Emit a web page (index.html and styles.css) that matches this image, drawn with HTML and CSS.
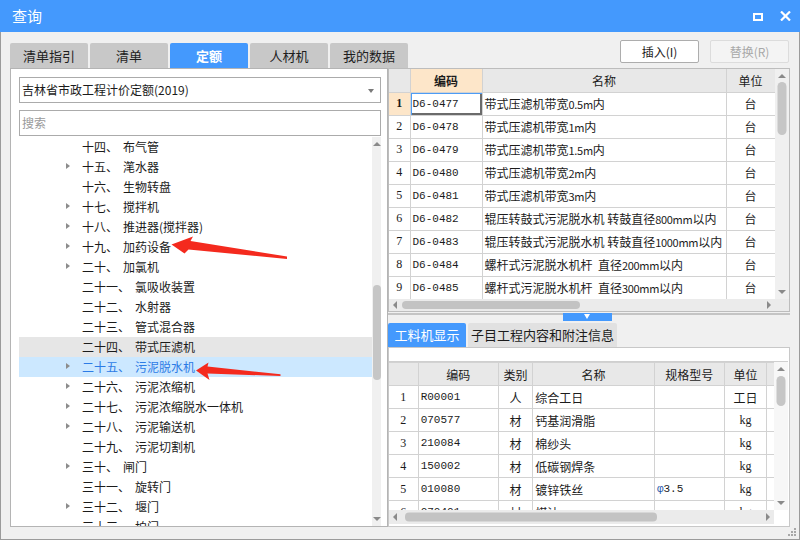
FILE: index.html
```html
<!DOCTYPE html>
<html lang="zh">
<head>
<meta charset="utf-8">
<title>查询</title>
<link rel="stylesheet" href="styles.css">
</head>
<body>
<div class="window">
  <div class="titlebar">
    <span class="title">查询</span>
    <div class="winctl">
      <svg class="ico-max" width="10" height="8" viewBox="0 0 10 8"><rect x="1" y="1" width="8" height="6" fill="none" stroke="#fff" stroke-width="2"/></svg>
      <svg class="ico-close" width="11" height="10" viewBox="0 0 11 10"><path d="M1 0.5 L10 9.5 M10 0.5 L1 9.5" stroke="#fff" stroke-width="2.2"/></svg>
    </div>
  </div>
  <div class="content">
    <div class="toprow">
      <div class="tabs">
        <div class="tab">清单指引</div>
        <div class="tab">清单</div>
        <div class="tab active">定额</div>
        <div class="tab">人材机</div>
        <div class="tab">我的数据</div>
      </div>
      <div class="buttons">
        <div class="btn">插入(I)</div>
        <div class="btn disabled">替换(R)</div>
      </div>
    </div>
    <div class="main">
      <div class="leftpanel">
        <div class="combo">吉林省市政工程计价定额(2019)<span class="combo-arrow"></span></div>
        <div class="search">搜索</div>
        <div class="tree">
          <div class="tree-rows">
            <div class="trow"><span class="tw"></span><span>十四、</span><span class="nm">布气管</span></div>
            <div class="trow"><span class="tw on"></span><span>十五、</span><span class="nm">滗水器</span></div>
            <div class="trow"><span class="tw"></span><span>十六、</span><span class="nm">生物转盘</span></div>
            <div class="trow"><span class="tw on"></span><span>十七、</span><span class="nm">搅拌机</span></div>
            <div class="trow"><span class="tw on"></span><span>十八、</span><span class="nm">推进器(搅拌器)</span></div>
            <div class="trow"><span class="tw on"></span><span>十九、</span><span class="nm">加药设备</span></div>
            <div class="trow"><span class="tw on"></span><span>二十、</span><span class="nm">加氯机</span></div>
            <div class="trow"><span class="tw"></span><span>二十一、</span><span class="nm">氯吸收装置</span></div>
            <div class="trow"><span class="tw"></span><span>二十二、</span><span class="nm">水射器</span></div>
            <div class="trow"><span class="tw"></span><span>二十三、</span><span class="nm">管式混合器</span></div>
            <div class="trow hover"><span class="tw"></span><span>二十四、</span><span class="nm">带式压滤机</span></div>
            <div class="trow selected"><span class="tw on"></span><span>二十五、</span><span class="nm">污泥脱水机</span></div>
            <div class="trow"><span class="tw on"></span><span>二十六、</span><span class="nm">污泥浓缩机</span></div>
            <div class="trow"><span class="tw on"></span><span>二十七、</span><span class="nm">污泥浓缩脱水一体机</span></div>
            <div class="trow"><span class="tw on"></span><span>二十八、</span><span class="nm">污泥输送机</span></div>
            <div class="trow"><span class="tw"></span><span>二十九、</span><span class="nm">污泥切割机</span></div>
            <div class="trow"><span class="tw on"></span><span>三十、</span><span class="nm">闸门</span></div>
            <div class="trow"><span class="tw"></span><span>三十一、</span><span class="nm">旋转门</span></div>
            <div class="trow"><span class="tw on"></span><span>三十二、</span><span class="nm">堰门</span></div>
            <div class="trow"><span class="tw"></span><span>三十三、</span><span class="nm">拍门</span></div>
          </div>
          <div class="vscroll tree-scroll">
            <span class="arr up"></span>
            <span class="thumb tree-thumb"></span>
            <span class="arr down"></span>
          </div>
        </div>
      </div>
      <div class="rightpanel">
        <div class="gridtop">
          <div class="gridarea">
            <table class="tbl top">
              <colgroup><col style="width:21px"><col style="width:72px"><col style="width:244px"><col style="width:49px"></colgroup>
              <thead><tr><th></th><th class="act">编码</th><th>名称</th><th>单位</th></tr></thead>
              <tbody>
                <tr><td class="rn act b">1</td><td class="code sel">D6-0477</td><td class="name">带式压滤机带宽<span class="a">0.5m</span>内</td><td class="c">台</td></tr>
                <tr><td class="rn">2</td><td class="code">D6-0478</td><td class="name">带式压滤机带宽<span class="a">1m</span>内</td><td class="c">台</td></tr>
                <tr><td class="rn">3</td><td class="code">D6-0479</td><td class="name">带式压滤机带宽<span class="a">1.5m</span>内</td><td class="c">台</td></tr>
                <tr><td class="rn">4</td><td class="code">D6-0480</td><td class="name">带式压滤机带宽<span class="a">2m</span>内</td><td class="c">台</td></tr>
                <tr><td class="rn">5</td><td class="code">D6-0481</td><td class="name">带式压滤机带宽<span class="a">3m</span>内</td><td class="c">台</td></tr>
                <tr><td class="rn">6</td><td class="code">D6-0482</td><td class="name">辊压转鼓式污泥脱水机 转鼓直径<span class="a">800mm</span>以内</td><td class="c">台</td></tr>
                <tr><td class="rn">7</td><td class="code">D6-0483</td><td class="name">辊压转鼓式污泥脱水机 转鼓直径<span class="a">1000mm</span>以内</td><td class="c">台</td></tr>
                <tr><td class="rn">8</td><td class="code">D6-0484</td><td class="name">螺杆式污泥脱水机杆&nbsp; 直径<span class="a">200mm</span>以内</td><td class="c">台</td></tr>
                <tr><td class="rn">9</td><td class="code">D6-0485</td><td class="name">螺杆式污泥脱水机杆&nbsp; 直径<span class="a">300mm</span>以内</td><td class="c">台</td></tr>
              </tbody>
            </table>
          </div>
          <div class="vscroll top-v">
            <span class="arr up"></span>
            <span class="thumb top-vthumb"></span>
            <span class="arr down"></span>
          </div>
          <div class="hscroll top-h">
            <span class="arr left"></span>
            <span class="hthumb top-hthumb"></span>
            <span class="arr right"></span>
          </div>
          <div class="corner"></div>
        </div>
        <div class="splitter"><span class="handle"></span></div>
        <div class="subtabs">
          <div class="subtab active">工料机显示</div>
          <div class="subtab">子目工程内容和附注信息</div>
        </div>
        <div class="lowerpanel">
          <div class="gridbottom">
            <div class="gridarea">
              <table class="tbl bottom">
                <colgroup><col style="width:28px"><col style="width:77px"><col style="width:33px"><col style="width:117px"><col style="width:67px"><col style="width:41px"><col style="width:40px"></colgroup>
                <thead><tr><th></th><th>编码</th><th>类别</th><th>名称</th><th>规格型号</th><th>单位</th><th class="l">含量</th></tr></thead>
                <tbody>
                  <tr><td class="rn">1</td><td class="code">R00001</td><td class="c">人</td><td class="name">综合工日</td><td></td><td class="c">工日</td><td class="l">2</td></tr>
                  <tr><td class="rn">2</td><td class="code">070577</td><td class="c">材</td><td class="name">钙基润滑脂</td><td></td><td class="c unit">kg</td><td></td></tr>
                  <tr><td class="rn">3</td><td class="code">210084</td><td class="c">材</td><td class="name">棉纱头</td><td></td><td class="c unit">kg</td><td></td></tr>
                  <tr><td class="rn">4</td><td class="code">150002</td><td class="c">材</td><td class="name">低碳钢焊条</td><td></td><td class="c unit">kg</td><td></td></tr>
                  <tr><td class="rn">5</td><td class="code">010080</td><td class="c">材</td><td class="name">镀锌铁丝</td><td class="code"><span class="phi">φ</span>3.5</td><td class="c unit">kg</td><td></td></tr>
                  <tr><td class="rn">6</td><td class="code">070401</td><td class="c">材</td><td class="name">煤油</td><td></td><td class="c unit">kg</td><td></td></tr>
                </tbody>
              </table>
            </div>
            <div class="vscroll low-v">
              <span class="arr up"></span>
              <span class="thumb low-vthumb"></span>
              <span class="arr down"></span>
            </div>
            <div class="hscroll low-h">
              <span class="arr left"></span>
              <span class="hthumb low-hthumb"></span>
              <span class="arr right"></span>
            </div>
            <div class="corner white"></div>
          </div>
        </div>
      </div>
    </div>
  </div>
  <svg class="grip" width="9" height="9" viewBox="0 0 9 9">
    <rect x="6" y="0" width="2" height="2" fill="#a8a8a8"/>
    <rect x="3" y="3" width="2" height="2" fill="#a8a8a8"/>
    <rect x="6" y="3" width="2" height="2" fill="#a8a8a8"/>
    <rect x="0" y="6" width="2" height="2" fill="#a8a8a8"/>
    <rect x="3" y="6" width="2" height="2" fill="#a8a8a8"/>
    <rect x="6" y="6" width="2" height="2" fill="#a8a8a8"/>
  </svg>
  <svg class="annot" width="800" height="540" viewBox="0 0 800 540">
    <polygon points="171.5,244.5 193,236.5 190.5,241 287,256.5 287,259 188.5,249.5 184.5,253.5" fill="#f42a1e"/>
    <polygon points="196,370.5 208.5,362.5 207.5,366.5 280.5,374.3 280.5,376 207.5,373.5 209.5,380" fill="#f42a1e"/>
  </svg>
</div>
</body>
</html>
```
FILE: styles.css
```css
* { box-sizing: border-box; margin: 0; padding: 0; }
html, body { width: 800px; height: 540px; overflow: hidden; }
body {
  font-family: "Noto Sans CJK SC", "Noto Sans", sans-serif;
  font-size: 12px;
  color: #1b1b1b;
  background: #f0f0f0;
}
.window { width: 800px; height: 540px; display: flex; flex-direction: column; position: relative; overflow: hidden; }

/* title bar */
.titlebar {
  height: 32px; flex: none;
  background: #4499fd;
  color: #fff;
  display: flex; align-items: center; justify-content: space-between;
  padding: 0 9px 0 12px;
}
.title { font-size: 15px; line-height: 32px; }
.winctl { display: flex; align-items: center; gap: 17px; }
.ico-max { margin-top: 1px; }

/* content frame */
.content {
  flex: 1; min-height: 0;
  border: 1px solid #9b9b9b; border-top: none;
  padding: 0 9px 12px 9px;
  display: flex; flex-direction: column;
}
.toprow { height: 36px; display: flex; justify-content: space-between; flex: none; }
.tabs { display: flex; gap: 2px; margin-top: 11px; height: 25px; }
.tab {
  width: 78px; height: 25px; line-height: 25px; text-align: center;
  background: #c8c8c8; border-radius: 2px 2px 0 0;
  font-size: 13px; color: #1e1e1e;
}
.tab.active { background: #4499fd; color: #fff; font-weight: bold; }
.buttons { display: flex; gap: 11px; margin-top: 8px; margin-right: 1px; }
.btn {
  width: 79px; height: 23px; line-height: 21px; text-align: center;
  border: 1px solid #adadad; border-radius: 2px; background: #fff; font-size: 12px;
}
.btn.disabled { border-color: #dcdcdc; color: #a8a8a8; background: #f4f4f4; }

.main {
  flex: 1; min-height: 0;
  display: grid; grid-template-columns: 378px 1fr; grid-template-rows: minmax(0, 1fr);
}

/* left panel */
.leftpanel {
  background: #fff; border: 1px solid #b4b4b4;
  padding: 8px 6px 0 8px;
  display: flex; flex-direction: column; min-height: 0; overflow: hidden;
}
.combo {
  height: 26px; line-height: 24px; border: 1px solid #ababab;
  padding-left: 2px; position: relative; flex: none;
}
.combo-arrow {
  position: absolute; right: 6px; top: 11px;
  border-top: 4px solid #7a7a7a; border-left: 3.5px solid transparent; border-right: 3.5px solid transparent;
}
.search {
  margin-top: 7px; height: 26px; line-height: 24px; border: 1px solid #ababab;
  padding-left: 2px; color: #9a9a9a; flex: none;
}
.tree {
  flex: 1; margin-top: 1px; min-height: 0; overflow: hidden;
  display: grid; grid-template-columns: 1fr 9px; grid-template-rows: minmax(0, 1fr);
}
.tree-rows { overflow: hidden; min-height: 0; }
.trow { height: 20px; line-height: 20px; display: flex; align-items: center; padding-left: 47px; white-space: nowrap; }
.trow.hover { background: #e6e6e6; }
.trow.selected { background: #cce8ff; color: #2c7be5; }
.tw { width: 16px; height: 20px; position: relative; flex: none; }
.tw.on::before {
  content: ""; position: absolute; left: 0; top: 6px;
  border-left: 4px solid #8c8c8c; border-top: 3.5px solid transparent; border-bottom: 3.5px solid transparent;
}
.nm { margin-left: 5px; }

/* scrollbars */
.vscroll { background: #f0f0f0; position: relative; min-height: 0; }
.hscroll { background: #ebebeb; position: relative; }
.thumb { position: absolute; left: 50%; transform: translateX(-50%); width: 9px; background: #c6c6c6; border-radius: 5px; }
.hthumb { position: absolute; top: 50%; transform: translateY(-50%); height: 8px; background: #c3c3c3; border-radius: 4px; }
.arr { position: absolute; width: 0; height: 0; }
.arr.up { top: 5px; left: 50%; margin-left: -4px; border-bottom: 4px solid #8a8a8a; border-left: 4px solid transparent; border-right: 4px solid transparent; }
.arr.down { bottom: 5px; left: 50%; margin-left: -4px; border-top: 4px solid #8a8a8a; border-left: 4px solid transparent; border-right: 4px solid transparent; }
.arr.left { left: 4px; top: 50%; margin-top: -4px; border-right: 4px solid #8a8a8a; border-top: 4px solid transparent; border-bottom: 4px solid transparent; }
.arr.right { right: 4px; top: 50%; margin-top: -4px; border-left: 4px solid #8a8a8a; border-top: 4px solid transparent; border-bottom: 4px solid transparent; }
.tree-thumb { top: 148px; height: 95px; width: 8px; }

/* right panel */
.rightpanel { display: flex; flex-direction: column; min-height: 0; overflow: hidden; }
.gridtop {
  height: 244px; flex: none;
  border: 1px solid #bdbdbd; background: #fff;
  display: grid; grid-template-columns: 1fr 14px; grid-template-rows: minmax(0, 1fr) 12px;
}
.gridarea { overflow: hidden; background: #fff; min-height: 0; min-width: 0; }
.corner { background: #ebebeb; }
.corner.white { background: #fff; }
.top-vthumb { top: 13px; height: 53px; }
.top-hthumb { left: 13px; width: 178px; }

.tbl { border-collapse: collapse; table-layout: fixed; }
.tbl.top { width: 386px; }
.tbl.bottom { width: 420px; }
.tbl th, .tbl td {
  border: 1px solid #d2d2d2; height: 23px; padding: 0;
  white-space: nowrap; overflow: hidden; font-weight: normal;
}
.tbl th { background: #e8e8e8; text-align: center; font-size: 12px; }
.tbl.top tr:first-child th { border-top: none; }
.tbl tr > :first-child { border-left: none; }
.tbl th.act { background: #fde6c9; font-weight: bold; }
.tbl td.act { background: #fde6c9; }
.tbl .b { font-weight: bold; }
.tbl td.rn { text-align: center; font-family: "Liberation Serif", serif; font-size: 12px; }
.tbl td.code { font-family: "Liberation Mono", monospace; font-size: 11px; padding-left: 2px; }
.tbl td.name { padding-left: 2px; }
.tbl td.name .a { font-size: 11px; letter-spacing: -0.3px; }
.tbl td.c { text-align: center; }
.tbl .l { text-align: left; padding-left: 10px; }
.tbl td.unit { font-family: "Liberation Serif", serif; font-size: 12px; }
.tbl td.sel { box-shadow: inset 1px 1px 0 #4d9cf5, inset -2px -2px 0 #6b6b6b; }
.phi { color: #2255aa; }

/* splitter */
.splitter { height: 10px; flex: none; position: relative; }
.splitter::before { content: ""; position: absolute; left: 0; right: 0; top: 1px; height: 2px; background: #c4c4c4; }
.handle { position: absolute; left: 175px; top: 1px; width: 49px; height: 8px; background: #4499fd; }
.handle::after {
  content: ""; position: absolute; left: 21px; top: 1px;
  border-top: 5px solid #fff; border-left: 3.5px solid transparent; border-right: 3.5px solid transparent;
}

.subtabs { display: flex; gap: 2px; margin-top: 1px; height: 24px; flex: none; }
.subtab { height: 24px; line-height: 24px; background: #e1e1e1; font-size: 13px; border-radius: 2px 2px 0 0; text-align: center; }
.subtab.active { background: #4499fd; color: #fff; width: 78px; }
.subtab.wide { width: 149px; }
.subtab:not(.active) { width: 149px; }

.lowerpanel {
  flex: 1; min-height: 0; overflow: hidden;
  border: 1px solid #c8c8c8; background: #fff;
  padding: 13px 1px 2px 0;
  display: flex; flex-direction: column;
}
.gridbottom {
  flex: 1; min-height: 0;
  display: grid; grid-template-columns: 1fr 14px; grid-template-rows: minmax(0, 1fr) 14px;
  border-top: 1px solid #cfcfcf;
}
.low-v { background: #f7f7f7; }
.low-vthumb { top: 14px; height: 30px; }
.low-h { background: #ebebeb; }
.low-hthumb { left: 16px; width: 252px; height: 9px; }

.grip { position: absolute; right: 3px; bottom: 3px; }
.annot { position: absolute; left: 0; top: 0; pointer-events: none; }
```
